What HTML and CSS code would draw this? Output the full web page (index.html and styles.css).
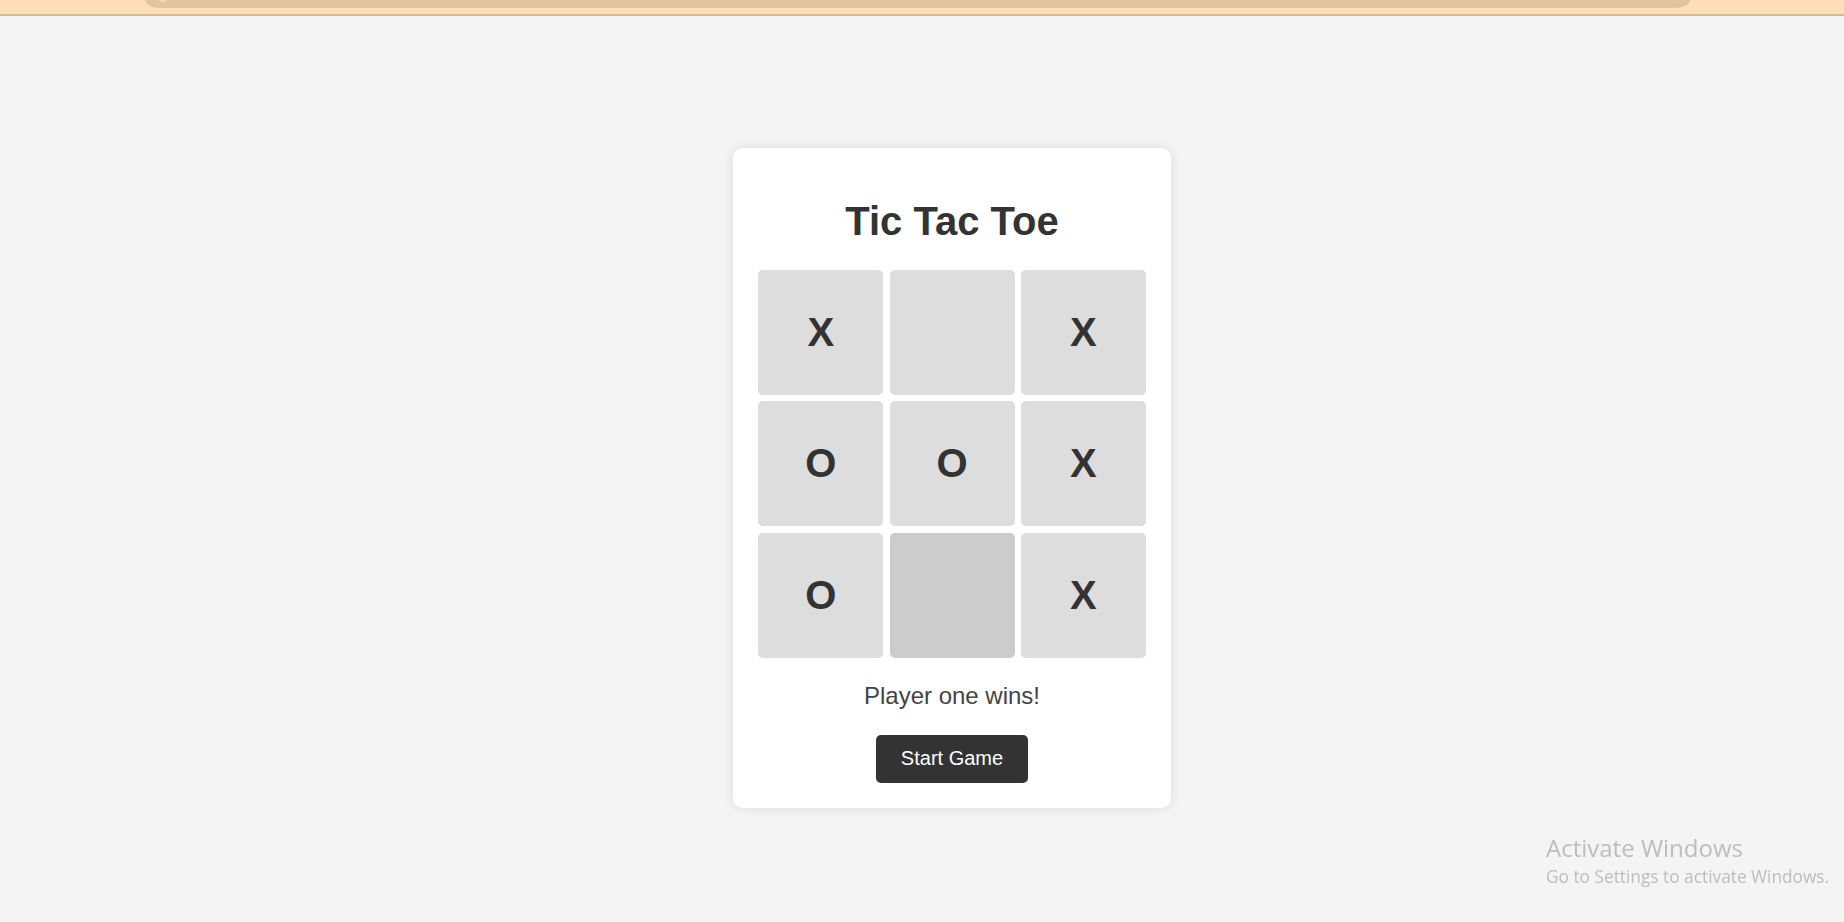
FILE: index.html
```html
<!DOCTYPE html>
<html>
<head>
<meta charset="utf-8">
<title>Tic Tac Toe</title>
<link rel="stylesheet" href="styles.css">
</head>
<body>
<div class="topbar"><div class="pill"><span class="dot"></span></div></div>
<main class="stage">
  <div class="card">
    <h1 class="title">Tic Tac Toe</h1>
    <div class="board">
      <div class="cell">X</div>
      <div class="cell"></div>
      <div class="cell">X</div>
      <div class="cell">O</div>
      <div class="cell">O</div>
      <div class="cell">X</div>
      <div class="cell">O</div>
      <div class="cell hover"></div>
      <div class="cell">X</div>
    </div>
    <p class="status">Player one wins!</p>
    <button class="start">Start Game</button>
  </div>
</main>
<div class="watermark">
  <div class="wm-title">Activate Windows</div>
  <div class="wm-sub">Go to Settings to activate Windows.</div>
</div>
</body>
</html>
```
FILE: styles.css
```css
html, body {
  margin: 0;
  padding: 0;
  height: 100%;
}
body {
  background: #f4f4f4;
  font-family: "Liberation Sans", Arial, sans-serif;
  color: #333;
  overflow: hidden;
}
.topbar {
  height: 14px;
  background: #ffdfb9;
  border-bottom: 2px solid #d6b993;
  position: relative;
}
.pill {
  margin-left: 145px;
  width: 1545px;
  height: 8px;
  background: #e0c5a0;
  border-radius: 0 0 16px 16px / 0 0 8px 8px;
  position: relative;
}
.dot {
  position: absolute;
  left: 14px;
  top: -3px;
  width: 8px;
  height: 5px;
  border-radius: 50%;
  background: #f3d9b5;
}
.stage {
  display: flex;
  justify-content: center;
  align-items: flex-start;
  padding-top: 132px;
  padding-left: 60px;
}
.card {
  width: 388px;
  padding: 25px;
  background: #fff;
  border-radius: 10px;
  box-shadow: 0 0 12px rgba(0, 0, 0, 0.1);
  display: flex;
  flex-direction: column;
  align-items: center;
}
.title {
  margin: 25px 0 26px;
  font-size: 40px;
  line-height: 46px;
  font-weight: bold;
  color: #333;
}
.board {
  display: grid;
  grid-template-columns: repeat(3, 125px);
  grid-template-rows: repeat(3, 125px);
  gap: 6.25px;
}
.cell {
  background: #ddd;
  border-radius: 5px;
  display: flex;
  align-items: center;
  justify-content: center;
  font-size: 40px;
  font-weight: bold;
  color: #333;
}
.cell.hover {
  background: #ccc;
}
.status {
  margin: 24px 0 25px;
  font-size: 24px;
  line-height: 28px;
  color: #444;
}
.start {
  font-family: "Liberation Sans", Arial, sans-serif;
  font-size: 20px;
  line-height: 23px;
  padding: 12.5px 25px;
  background: #333;
  color: #fff;
  border: none;
  border-radius: 5px;
}
.watermark {
  position: fixed;
  left: 1546px;
  top: 832px;
  font-family: "Open Sans", "Noto Sans", sans-serif;
  color: #bdbdbd;
}
.wm-title {
  font-size: 24px;
  line-height: 31px;
}
.wm-sub {
  font-size: 17.3px;
  line-height: 23px;
  margin-top: 2px;
}
```
